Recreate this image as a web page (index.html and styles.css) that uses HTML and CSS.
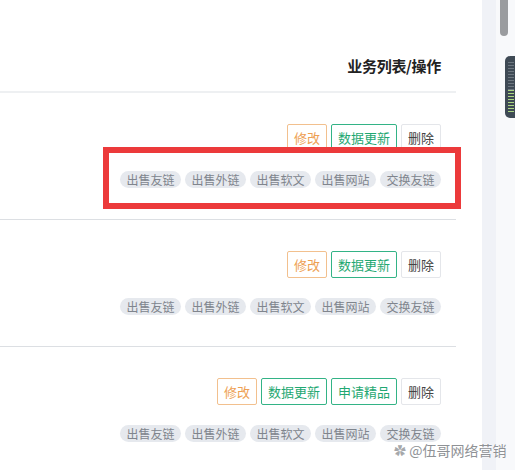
FILE: index.html
```html
<!DOCTYPE html>
<html lang="zh-CN">
<head>
    <meta charset="UTF-8">
    <title>业务列表</title>
    <link rel="stylesheet" href="styles.css">
</head>
<body>
    <div class="page">
        <div class="main">
            <div class="list-head">业务列表/操作</div>

            <div class="row">
                <div class="actions">
                    <span class="btn btn-edit">修改</span>
                    <span class="btn btn-green">数据更新</span>
                    <span class="btn btn-plain">删除</span>
                </div>
                <div class="tags">
                    <span class="tag">出售友链</span>
                    <span class="tag">出售外链</span>
                    <span class="tag">出售软文</span>
                    <span class="tag">出售网站</span>
                    <span class="tag">交换友链</span>
                </div>
                <div class="highlight"></div>
            </div>

            <div class="row">
                <div class="actions">
                    <span class="btn btn-edit">修改</span>
                    <span class="btn btn-green">数据更新</span>
                    <span class="btn btn-plain">删除</span>
                </div>
                <div class="tags">
                    <span class="tag">出售友链</span>
                    <span class="tag">出售外链</span>
                    <span class="tag">出售软文</span>
                    <span class="tag">出售网站</span>
                    <span class="tag">交换友链</span>
                </div>
            </div>

            <div class="row">
                <div class="actions">
                    <span class="btn btn-edit">修改</span>
                    <span class="btn btn-green">数据更新</span>
                    <span class="btn btn-green">申请精品</span>
                    <span class="btn btn-plain">删除</span>
                </div>
                <div class="tags">
                    <span class="tag">出售友链</span>
                    <span class="tag">出售外链</span>
                    <span class="tag">出售软文</span>
                    <span class="tag">出售网站</span>
                    <span class="tag">交换友链</span>
                </div>
            </div>
        </div>

        <div class="side">
            <div class="thumb"></div>
            <div class="meter">
                <div class="meter-bars"></div>
            </div>
        </div>
    </div>

    <div class="watermark"><span class="paw">&#10047;</span> @伍哥网络营销</div>
</body>
</html>
```

FILE: styles.css
```css
/* Reset */
* {
    margin: 0;
    padding: 0;
    box-sizing: border-box;
}

body {
    font-family: 'Noto Sans CJK SC', 'Noto Sans', sans-serif;
    background-color: #fff;
    width: 515px;
    height: 470px;
    overflow: hidden;
    position: relative;
}

.page {
    display: flex;
    height: 470px;
}

/* Main list */
.main {
    width: 482px;
    padding-right: 26px;
}

.list-head {
    height: 93px;
    padding: 54px 15px 0 0;
    text-align: right;
    font-size: 15px;
    font-weight: bold;
    color: #222;
    line-height: 24px;
    letter-spacing: -0.3px;
    border-bottom: 2px solid #eef0f2;
}

.row {
    position: relative;
    height: 127px;
    padding: 31px 15px 0 0;
    border-bottom: 1px solid #dcdfe3;
}

.row:last-child {
    border-bottom: none;
}

.actions {
    display: flex;
    justify-content: flex-end;
    gap: 4px;
}

.btn {
    display: inline-block;
    height: 27px;
    line-height: 25px;
    padding: 0 6px;
    font-size: 13px;
    border: 1px solid #e4e6ea;
    border-radius: 2px;
    background-color: #fff;
}

.btn-edit {
    color: #eea052;
    border-color: #f2c08e;
}

.btn-green {
    color: #1fa872;
    border-color: #33b386;
}

.btn-plain {
    color: #444;
}

.tags {
    display: flex;
    justify-content: flex-end;
    gap: 4px;
    margin-top: 20px;
}

.tag {
    height: 17px;
    line-height: 17px;
    padding: 0 6.5px;
    font-size: 12px;
    color: #80858d;
    background-color: #e6e9ee;
    border-radius: 9px;
}

/* Red annotation box over first row */
.highlight {
    position: absolute;
    left: 103px;
    top: 54px;
    width: 358px;
    height: 62px;
    border: 6px solid #ec3a3b;
}

/* Right scroll strip */
.side {
    position: relative;
    flex: 1;
    background: linear-gradient(to right, #f0f2f7 0, #f0f2f7 14px, #f8f9fb 14px);
}

.thumb {
    position: absolute;
    left: 18px;
    top: 0;
    width: 8px;
    height: 36px;
    background-color: #9a9c9f;
    border-radius: 0 0 4px 4px;
}

.meter {
    position: absolute;
    left: 23px;
    top: 56px;
    width: 12px;
    height: 62px;
    background-color: #3f4a55;
    border-radius: 5px 0 0 5px;
    padding: 6px 3px;
}

.meter-bars {
    height: 100%;
    background: repeating-linear-gradient(to bottom, #6d7780 0, #6d7780 1px, #3f4a55 1px, #3f4a55 3px);
    position: relative;
}

.meter-bars::after {
    content: "";
    position: absolute;
    left: 0;
    right: 0;
    bottom: 0;
    height: 45%;
    background: repeating-linear-gradient(to bottom, #c8d96a 0, #8fd39a 1px, #3f4a55 1px, #3f4a55 3px);
}

/* Watermark */
.watermark {
    position: absolute;
    left: 394px;
    top: 441px;
    font-size: 14px;
    color: #8f9296;
    text-shadow: 0 0 1px #fff, 0 0 2px #fff;
    line-height: 18px;
}

.paw {
    font-size: 12px;
    color: #a6a8ab;
}
```
